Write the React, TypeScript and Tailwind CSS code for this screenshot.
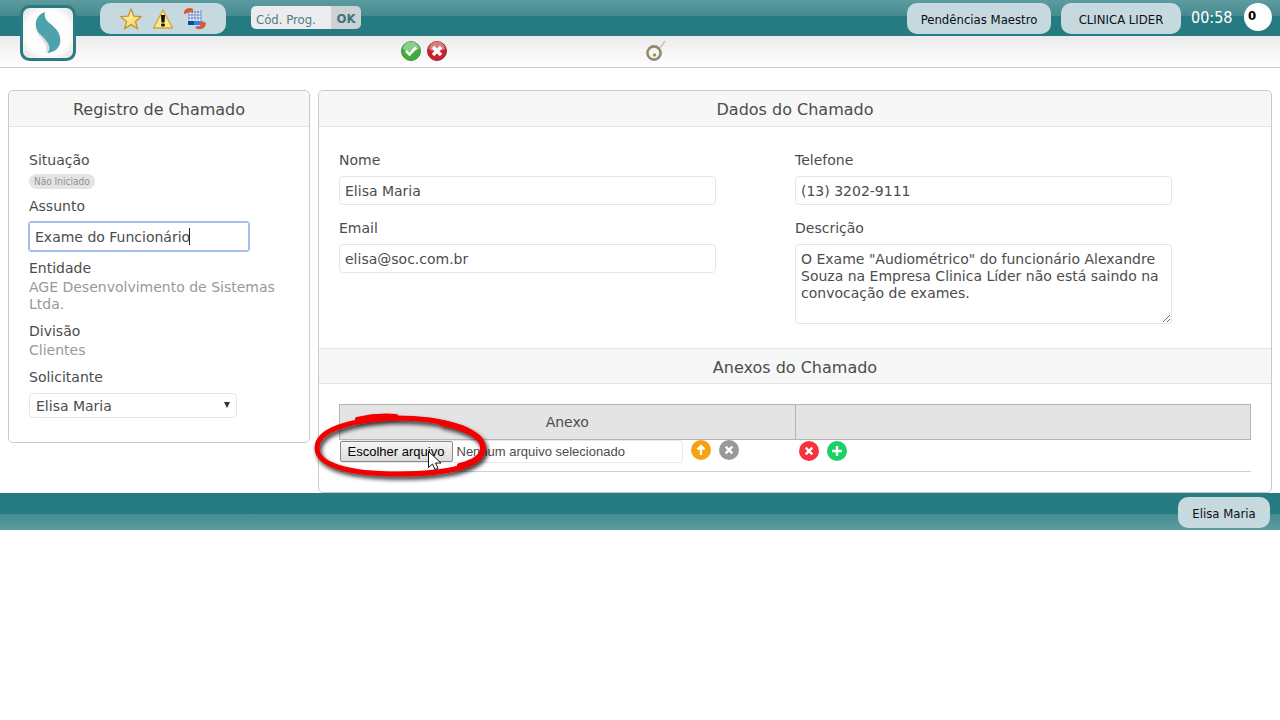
import { useRef, useState } from 'react';

const UI_FONT = "font-['DejaVu_Sans_Condensed','DejaVu_Sans',sans-serif] [font-stretch:condensed]";
const PILL = 'h-[31px] rounded-[10px] bg-[#c5d9de] pt-px text-center text-[13px] text-[#0b0f14]';
const FIELD = 'w-[377px] max-w-full rounded-[4px] border border-[#e6e6e6] bg-white px-[5px] text-[14px] outline-none';

function Logo() {
    return (
        <svg viewBox="0 0 56 56" className="h-14 w-14" aria-hidden="true">
            <defs>
                <radialGradient id="logoBg" cx="50%" cy="50%" r="70%">
                    <stop offset="0.6" stopColor="#fdfdfd" />
                    <stop offset="1" stopColor="#d9d7da" />
                </radialGradient>
            </defs>
            <rect x="1.5" y="1.5" width="53" height="53" rx="8" fill="url(#logoBg)" stroke="#2b7b80" strokeWidth="3" />
            <path d="M21 10C14 17 14 25 21 33c5 6 7 10 4 15 11-8 9-17 1-25-5-5-6-8-5-13z" fill="#dcdcde" />
            <path d="M25 7C15 10 13 22 20 29c7 7 13 13 7 19 14-1 17-14 9-24C31 18 23 16 25 7z" fill="#4ca3ab" />
        </svg>
    );
}

function StarIcon() {
    return (
        <svg viewBox="0 0 24 24" className="h-6 w-6" aria-hidden="true">
            <defs>
                <linearGradient id="star" x1="0" y1="0" x2="1" y2="1">
                    <stop offset="0" stopColor="#ffffd8" />
                    <stop offset="1" stopColor="#f7ca3c" />
                </linearGradient>
            </defs>
            <path
                d="M12 2l2.8 7.2 7.5.4-5.8 4.8 2 7.4L12 17.6l-6.400 4.200 2-7.400L1.700 9.600l7.500-.4z"
                fill="url(#star)"
                stroke="#c29430"
                strokeWidth="1.3"
                strokeLinejoin="round"
            />
        </svg>
    );
}

function WarningIcon() {
    return (
        <svg viewBox="0 0 22 22" className="h-[22px] w-[22px]" aria-hidden="true">
            <path d="M11 2L1.500 20h19z" fill="#fbe88a" stroke="#cfa83c" strokeWidth="1.3" strokeLinejoin="round" />
            <path d="M9 7h4l-.5 7.500h-3z" fill="#111" />
            <rect x="9.200" y="15.500" width="3.600" height="3" rx="1" fill="#111" />
        </svg>
    );
}

function DatabaseSyncIcon() {
    return (
        <svg viewBox="0 0 24 24" className="h-6 w-6" aria-hidden="true">
            <rect x="5" y="3" width="13" height="11" fill="#f4f8fc" />
            <path d="M6 3v11M9 3v11M12 3v11M15 3v11M18 3v11M5 5h13M5 8h13M5 11h13" stroke="#6f8fc0" strokeWidth="1" />
            <path d="M5 14h13v4H5z" fill="#2f86e0" />
            <path d="M5 14h6v4H5z" fill="#0b4a9c" />
            <path d="M1 5c1-4 6-5 9-3v4C8 4 6 5 5 6L1 7z" fill="#d85a38" />
            <path d="M23 16c0 4-4 7-8 6l-3-1 2-2c3 1 4-1 4-3h-2l3-2z" fill="#d85a38" />
        </svg>
    );
}

function GlossyIcon({ kind }: { kind: 'ok' | 'cancel' }) {
    const ok = kind === 'ok';
    return (
        <svg viewBox="0 0 20 20" className="h-5 w-5" aria-hidden="true">
            <circle cx="10" cy="10" r="9.500" fill={ok ? '#3fae3c' : '#c9202c'} stroke={ok ? '#4b8a45' : '#94303a'} />
            <path d="M2 8a8 7.500 0 0 1 16 0c-3 2-5 1-8 2s-5 0-8-2z" fill="#fff" opacity="0.4" />
            <path
                d={ok ? 'M5 10l3.500 3.500L15 6.500' : 'M6 6l8 8M14 6l-8 8'}
                fill="none"
                stroke="#fff"
                strokeWidth={ok ? 2.6 : 3.4}
            />
        </svg>
    );
}

function RingIcon() {
    return (
        <svg viewBox="0 0 20 22" className="h-[22px] w-5" aria-hidden="true">
            <path d="M14 8l5-7" stroke="#b5b5ad" strokeWidth="1.2" />
            <circle cx="8" cy="13" r="6.600" fill="#f5f4ec" stroke="#8f8c6b" strokeWidth="2.600" />
            <circle cx="8.500" cy="15" r="1.700" fill="#97946a" />
        </svg>
    );
}

function RoundIcon({ color, d }: { color: string; d: string }) {
    return (
        <svg viewBox="0 0 20 20" className="h-5 w-5" aria-hidden="true">
            <circle cx="10" cy="10" r="10" fill={color} />
            <path d={d} fill="none" stroke="#fff" strokeWidth="2.400" />
        </svg>
    );
}

// Hand drawn highlight and mouse pointer over the file chooser
function Highlight() {
    return (
        <svg
            viewBox="0 0 180 74"
            className="pointer-events-none absolute -left-[28px] -top-[30px] h-[74px] w-[180px] max-w-none"
            aria-hidden="true"
        >
            <defs>
                <filter id="shadow" x="-10%" y="-10%" width="125%" height="130%">
                    <feDropShadow dx="2" dy="3" stdDeviation="2" floodColor="#000" floodOpacity="0.8" />
                </filter>
            </defs>
            <g filter="url(#shadow)" fill="none" stroke="#f00505" strokeLinecap="round">
                <path d="M84 7c48 0 86 12 87 30s-35 26-85 26S5 54 5 37 34 9 84 7z" strokeWidth="5" />
                <path d="M45 8c13-3 26-4 39-3" strokeWidth="4" />
                <path d="M130 12c26 5 41 14 41 25 0 8-8 14-23 18" strokeWidth="6" />
            </g>
            <path
                d="M116.500 40.500v16l4-3.500 2.500 5.500 3-1.300-2.500-5.200h5.500z"
                fill="#fff"
                stroke="#111"
                strokeWidth="1"
                strokeLinejoin="round"
            />
        </svg>
    );
}

function PanelTitle({ children, className = '' }: { children: string; className?: string }) {
    return (
        <h2 className={`h-9 border-b border-[#e4e4e4] bg-[#f7f7f7] text-center text-[16px] leading-[37px] ${className}`}>
            {children}
        </h2>
    );
}

export default function App() {
    const fileRef = useRef<HTMLInputElement>(null);
    const [fileName, setFileName] = useState('');
    const [form, setForm] = useState({
        codigo: '',
        assunto: 'Exame do Funcionário',
        solicitante: 'Elisa Maria',
        nome: 'Elisa Maria',
        email: 'elisa@soc.com.br',
        telefone: '(13) 3202-9111',
        descricao:
            'O Exame "Audiométrico" do funcionário Alexandre Souza na Empresa Clinica Líder não está saindo na convocação de exames.',
    });

    const handleChange = (e: React.ChangeEvent<HTMLInputElement | HTMLTextAreaElement | HTMLSelectElement>) => {
        setForm({ ...form, [e.target.name]: e.target.value });
    };

    return (
        <div className="bg-white font-['DejaVu_Sans',sans-serif] text-[14px] leading-[17px] text-[#4c4c4c]">
            <header className={`relative ${UI_FONT}`}>
                <div className="flex h-9 items-start bg-[linear-gradient(#5c9ca0_0px,#45898f_16px,#267a82_16px,#267a82_36px)] pl-[100px] pr-2 pt-[3px]">
                    <a href="#inicio" aria-label="Início" className="absolute left-5 top-[5px]">
                        <Logo />
                    </a>
                    <nav className="flex h-[31px] w-[126px] items-center justify-center gap-[9px] rounded-[10px] bg-[#c5d9de]">
                        <button type="button" aria-label="Favoritos"><StarIcon /></button>
                        <button type="button" aria-label="Alertas"><WarningIcon /></button>
                        <button type="button" aria-label="Sincronizar"><DatabaseSyncIcon /></button>
                    </nav>
                    <form
                        onSubmit={(e) => e.preventDefault()}
                        className="ml-[25px] mt-[3px] flex h-[23px] w-[110px] overflow-hidden rounded-[5px]"
                    >
                        <input
                            name="codigo"
                            aria-label="Código do programa"
                            value={form.codigo}
                            onChange={handleChange}
                            placeholder="Cód. Prog."
                            className="w-20 bg-[#ececee] pl-[5px] pt-[3px] text-[13px] outline-none placeholder:text-[#4d7c84]"
                        />
                        <button type="submit" className="w-[30px] bg-[#cdd2d4] pt-px text-[13px] font-bold text-[#3a7580]">
                            OK
                        </button>
                    </form>
                    <div className="ml-auto flex items-start gap-[10px]">
                        <button type="button" className={`w-36 ${PILL}`}>Pendências Maestro</button>
                        <button type="button" className={`w-[120px] ${PILL}`}>CLINICA LIDER</button>
                        <span className="w-[43px] pt-[6px] text-[16px] text-white">00:58</span>
                        <span className="h-7 w-7 rounded-full bg-white pl-1 pt-1 text-[13px] font-bold text-black">0</span>
                    </div>
                </div>
                <div className="flex h-8 items-center border-b border-[#cbcbcb] bg-[linear-gradient(#ebebeb,#ffffff)] pb-[2px] pl-[401px]">
                    <button type="button" aria-label="Gravar"><GlossyIcon kind="ok" /></button>
                    <button type="button" aria-label="Cancelar" className="ml-[6px]"><GlossyIcon kind="cancel" /></button>
                    <button type="button" aria-label="Ajuda" className="ml-[199px]"><RingIcon /></button>
                </div>
            </header>

            <main className="flex items-start gap-2 px-2 pt-[22px]">
                <section className="w-[302px] shrink-0 rounded-[5px] border border-[#c9c9c9]">
                    <PanelTitle className="rounded-t-[5px]">Registro de Chamado</PanelTitle>
                    <div className="px-5 pb-6 pt-[25px]">
                        <p>Situação</p>
                        <span className="mt-[5px] block h-[15px] w-fit rounded-full bg-[#e4e4e4] px-[5px] text-[10px] leading-[15px] text-[#929292] font-['DejaVu_Sans_Condensed','DejaVu_Sans',sans-serif]">
                            Não Iniciado
                        </span>
                        <label htmlFor="assunto" className="mt-[9px] block">Assunto</label>
                        <div className="relative mt-[7px] w-[220px]">
                            <input
                                id="assunto"
                                name="assunto"
                                value={form.assunto}
                                onChange={handleChange}
                                className="block h-[29px] w-full rounded-[2px] border border-[#a5bdea] px-[5px] outline-1 outline-[#a5bdea]"
                            />
                            <span className="absolute left-[160px] top-[6px] h-[17px] w-px bg-[#222]" />
                        </div>
                        <p className="mt-[9px]">Entidade</p>
                        <p className="mt-[2px] text-[#999]">AGE Desenvolvimento de Sistemas Ltda.</p>
                        <p className="mt-[10px]">Divisão</p>
                        <p className="mt-[2px] text-[#999]">Clientes</p>
                        <label htmlFor="solicitante" className="mt-[10px] block">Solicitante</label>
                        <div className="relative mt-[7px] w-[208px]">
                            <select
                                id="solicitante"
                                name="solicitante"
                                value={form.solicitante}
                                onChange={handleChange}
                                className="block h-[25px] w-full appearance-none rounded-[4px] border border-[#e6e6e6] bg-white pl-[6px] pt-px outline-none"
                            >
                                <option>Elisa Maria</option>
                            </select>
                            <svg viewBox="0 0 6 6" className="pointer-events-none absolute right-[7px] top-[9px] h-[6px] w-[6px]" aria-hidden="true">
                                <path d="M0 0h6L3 6z" fill="#333" />
                            </svg>
                        </div>
                    </div>
                </section>

                <section className="min-w-0 flex-1 rounded-[5px] border border-[#c9c9c9]">
                    <PanelTitle className="rounded-t-[5px]">Dados do Chamado</PanelTitle>
                    <div className="grid grid-cols-2 px-5 pb-6 pt-[25px]">
                        <div>
                            <label htmlFor="nome" className="block">Nome</label>
                            <input id="nome" name="nome" value={form.nome} onChange={handleChange} className={`${FIELD} mt-[7px] block h-[29px]`} />
                            <label htmlFor="email" className="mt-[15px] block">Email</label>
                            <input id="email" name="email" type="email" value={form.email} onChange={handleChange} className={`${FIELD} mt-[7px] block h-[29px]`} />
                        </div>
                        <div>
                            <label htmlFor="telefone" className="block">Telefone</label>
                            <input id="telefone" name="telefone" type="tel" value={form.telefone} onChange={handleChange} className={`${FIELD} mt-[7px] block h-[29px]`} />
                            <label htmlFor="descricao" className="mt-[15px] block">Descrição</label>
                            <textarea
                                id="descricao"
                                name="descricao"
                                value={form.descricao}
                                onChange={handleChange}
                                className={`${FIELD} mt-[7px] block h-20 py-[6px] leading-[17px]`}
                            />
                        </div>
                    </div>

                    <PanelTitle className="border-t">Anexos do Chamado</PanelTitle>
                    <div className="p-5">
                        <table className="w-full table-fixed border-collapse">
                            <thead>
                                <tr className="h-[35px] bg-[#e4e4e4]">
                                    <th className="border border-[#b4b4b4] font-normal">Anexo</th>
                                    <th aria-label="Ações" className="border border-[#b4b4b4]" />
                                </tr>
                            </thead>
                            <tbody>
                                <tr className="h-8 border-b border-[#cfcfcf] align-top">
                                    <td>
                                        <div className="flex gap-2">
                                            <div className="relative flex h-[23px] w-[343px] items-center gap-1 rounded-[4px] border border-l-0 border-[#e9e9e9] font-['Liberation_Sans',sans-serif] text-[13px]">
                                                <button
                                                    type="button"
                                                    onClick={() => fileRef.current?.click()}
                                                    className="h-[21px] w-[113px] rounded-[2px] border border-[#8a8a8a] bg-[linear-gradient(#f6f6f6,#dddddd)] text-black"
                                                >
                                                    Escolher arquivo
                                                </button>
                                                <span>{fileName || 'Nenhum arquivo selecionado'}</span>
                                                <input
                                                    ref={fileRef}
                                                    type="file"
                                                    aria-label="Anexo"
                                                    className="hidden"
                                                    onChange={(e) => setFileName(e.target.files?.[0]?.name ?? '')}
                                                />
                                                <Highlight />
                                            </div>
                                            <button type="button" aria-label="Enviar" className="h-5">
                                                <RoundIcon color="#f5a112" d="M10 15V6M6.500 9.500L10 6l3.500 3.500" />
                                            </button>
                                            <button type="button" aria-label="Limpar" className="h-5">
                                                <RoundIcon color="#999999" d="M6.700 6.700l6.600 6.600M13.300 6.700l-6.600 6.600" />
                                            </button>
                                        </div>
                                    </td>
                                    <td>
                                        <div className="flex gap-2 pl-1 pt-px">
                                            <button type="button" aria-label="Remover">
                                                <RoundIcon color="#f5333b" d="M6.700 6.700l6.600 6.600M13.300 6.700l-6.600 6.600" />
                                            </button>
                                            <button type="button" aria-label="Adicionar">
                                                <RoundIcon color="#1bd067" d="M10 5v10M5 10h10" />
                                            </button>
                                        </div>
                                    </td>
                                </tr>
                            </tbody>
                        </table>
                    </div>
                </section>
            </main>

            <footer className={`flex h-[37px] items-start justify-end bg-[linear-gradient(#267a82_0px,#267a82_21px,#458b92_21px,#5c9ca0_37px)] pr-[10px] pt-1 ${UI_FONT}`}>
                <button type="button" className={`w-[92px] ${PILL}`}>Elisa Maria</button>
            </footer>
        </div>
    );
}
